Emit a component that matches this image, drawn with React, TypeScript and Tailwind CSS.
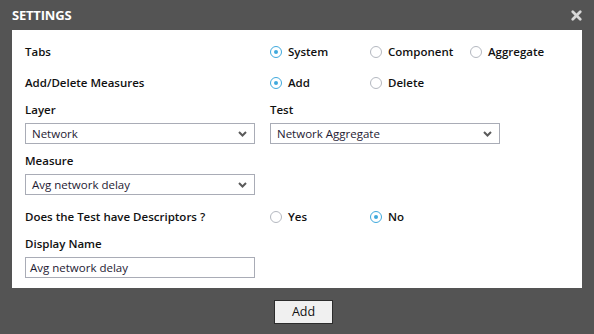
import { X } from "lucide-react"

function Radio({ checked, label }: { checked?: boolean; label: string }) {
  return (
    <div className="flex items-center w-[100px] h-[16px]">
      <span
        className={`flex items-center justify-center w-[12px] h-[12px] rounded-full border ${
          checked ? "border-[#3fa9dd]" : "border-[#b4b8c0]"
        } bg-white`}
      >
        {checked && <span className="w-[4px] h-[4px] rounded-full bg-[#3fa9dd]" />}
      </span>
      <span className="ml-[6px] font-semibold text-[#111]">{label}</span>
    </div>
  )
}

function Select({ value, width }: { value: string; width: string }) {
  return (
    <div className={`flex items-center justify-between h-[21px] border border-[#a9acb6] bg-white pl-[6px] pr-[7px] ${width}`}>
      <span className="text-[#1e1a33]">{value}</span>
      <svg width="9" height="6" viewBox="0 0 9 6" className="text-[#5a5a5a]">
        <path d="M1 1 L4.5 4.5 L8 1" fill="none" stroke="currentColor" strokeWidth="2" />
      </svg>
    </div>
  )
}

export default function App() {
  return (
    <div
      className="w-[594px] h-[334px] bg-[#545454] flex flex-col text-[11.5px] leading-[16px]"
      style={{ fontFamily: '"Open Sans", "Liberation Sans", sans-serif' }}
    >
      {/* header */}
      <div className="h-[30px] flex items-center justify-between pl-[12px] pr-[10px]">
        <span className="text-white font-bold text-[13px] tracking-[-0.2px]">SETTINGS</span>
        <X className="w-[15px] h-[15px] text-[#d8d8d8]" strokeWidth={4.5} />
      </div>

      {/* body */}
      <div className="mx-[12px] bg-white pt-[14px] pl-[13px] pb-[10px] flex flex-col">
        <div className="flex">
          <div className="w-[245px] font-semibold text-[#111]">Tabs</div>
          <Radio checked label="System" />
          <Radio label="Component" />
          <Radio label="Aggregate" />
        </div>

        <div className="flex mt-[15px]">
          <div className="w-[245px] font-semibold text-[#111]">Add/Delete Measures</div>
          <Radio checked label="Add" />
          <Radio label="Delete" />
        </div>

        <div className="flex mt-[11px]">
          <div className="w-[245px]">
            <div className="font-semibold text-[#111]">Layer</div>
            <div className="mt-[5px]">
              <Select value="Network" width="w-[230px]" />
            </div>
          </div>
          <div>
            <div className="font-semibold text-[#111]">Test</div>
            <div className="mt-[5px]">
              <Select value="Network Aggregate" width="w-[230px]" />
            </div>
          </div>
        </div>

        <div className="mt-[9px] font-semibold text-[#111]">Measure</div>
        <div className="mt-[5px]">
          <Select value="Avg network delay" width="w-[230px]" />
        </div>

        <div className="flex mt-[14px]">
          <div className="w-[245px] font-semibold text-[#111]">Does the Test have Descriptors ?</div>
          <Radio label="Yes" />
          <Radio checked label="No" />
        </div>

        <div className="mt-[11px] font-semibold text-[#111]">Display Name</div>
        <div className="mt-[5px] w-[230px] h-[21px] border border-[#a9acb6] flex items-center pl-[4px] text-[#1e1a33]">
          Avg network delay
        </div>
      </div>

      {/* footer */}
      <div className="flex mt-[12px] pl-[274px]">
        <button className="w-[59px] h-[24px] bg-[#f0f0f0] border border-[#2c2c2c] text-[12.5px] text-[#111]">
          Add
        </button>
      </div>
    </div>
  )
}
